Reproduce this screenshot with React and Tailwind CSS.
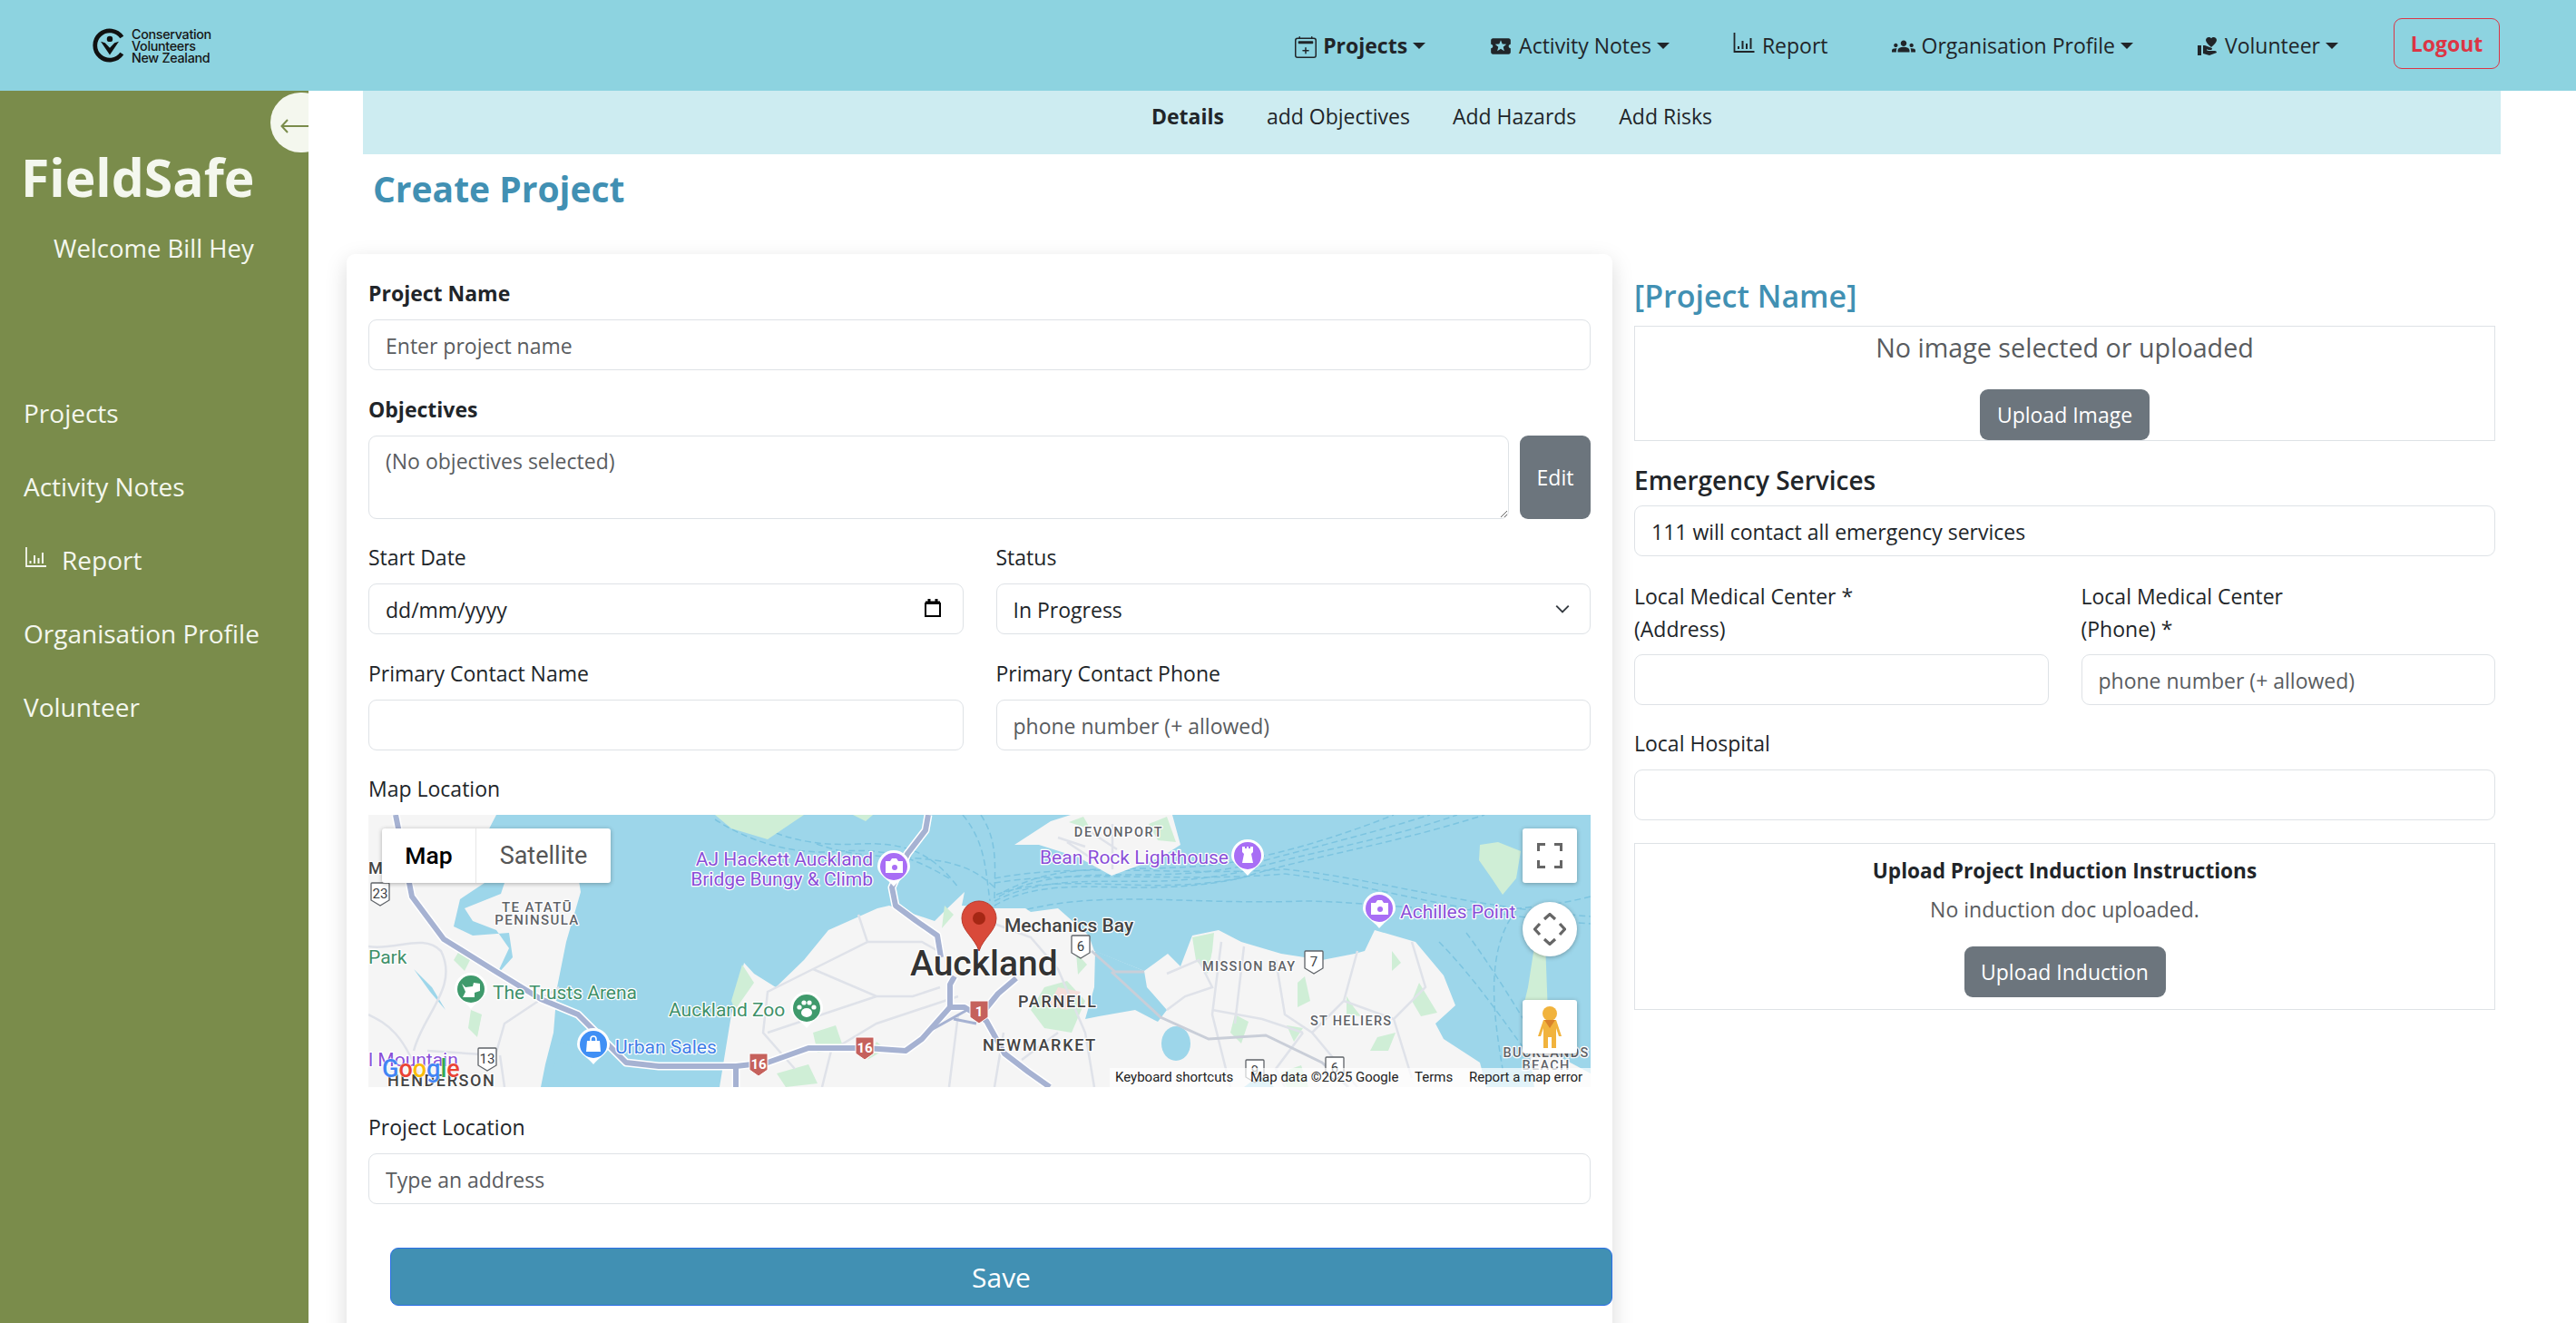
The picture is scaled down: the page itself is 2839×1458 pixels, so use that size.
import { MdLocalActivity, MdGroups, MdVolunteerActivism } from "react-icons/md";
import { BsCalendar2Plus } from "react-icons/bs";

const fontBody = "font-['Open_Sans',sans-serif]";

function Caret() {
  return <span className="ml-[6px] inline-block border-x-[7px] border-t-[7px] border-x-transparent border-t-[#212529]" />;
}

function ChartIcon({ className }) {
  return (
    <svg viewBox="0 0 24 24" fill="none" stroke="currentColor" className={className}>
      <path d="M1 1v21h22" strokeWidth="1.8" />
      <path d="M5.5 16v3M10 10v9M14.5 13v6M19 7v12" strokeWidth="2" />
    </svg>
  );
}

function NavItem({ icon, label, bold, caret }) {
  return (
    <div className={`flex items-center text-[#212529] ${bold ? "font-bold" : ""}`}>
      {icon}
      <span className="ml-[7px]">{label}</span>
      {caret && <Caret />}
    </div>
  );
}

function Logo() {
  return (
    <div className="flex items-center ml-[102px]">
      <svg viewBox="0 0 40 40" className="w-[38px] h-[38px]">
        <path d="M34 10.5A17 17 0 1 0 34 29.5" fill="none" stroke="#111" strokeWidth="5" />
        <circle cx="20" cy="12.5" r="3.4" fill="#111" />
        <path d="M9.5 15.5L20 31L30.5 15.5L25.5 17L20 23L14.5 17Z" fill="#111" />
      </svg>
      <div className="ml-[5px] font-['Inter',sans-serif] font-medium text-[14.3px] leading-[13px] tracking-[-0.3px] text-[#151515]">
        <div>Conservation</div>
        <div>Volunteers</div>
        <div>New Zealand</div>
      </div>
    </div>
  );
}

function Header() {
  return (
    <header className="h-[100px] shrink-0 bg-[#8dd3e0] flex items-center text-[23px]">
      <Logo />
      <nav className="ml-auto pr-[84px] flex items-center gap-[70px]">
        <NavItem bold caret label="Projects" icon={<BsCalendar2Plus className="w-[24px] h-[26px] mt-[4px]" />} />
        <NavItem caret label="Activity Notes" icon={<MdLocalActivity className="w-[26px] h-[26px] mt-[2px]" />} />
        <NavItem label="Report" icon={<ChartIcon className="w-[25px] h-[24px] mb-[6px]" />} />
        <NavItem caret label="Organisation Profile" icon={<MdGroups className="w-[26px] h-[26px] mt-[2px]" />} />
        <NavItem caret label="Volunteer" icon={<MdVolunteerActivism className="w-[24px] h-[24px] mt-[2px]" />} />
        <button className="-ml-[9px] mb-[4px] w-[117px] h-[56px] rounded-[9px] border border-[#dc3545] text-[#dc3545] font-bold text-[23px]">Logout</button>
      </nav>
    </header>
  );
}

function Sidebar() {
  const links = ["Projects", "Activity Notes", "Report", "Organisation Profile", "Volunteer"];
  return (
    <aside className="relative w-[340px] shrink-0 bg-[#7a8c4b] text-[#f4f7ee] overflow-hidden">
      <div className="absolute left-[298px] top-[2px] w-[68px] h-[66px] rounded-full bg-[#f4f7ee]">
        <svg viewBox="0 0 32 16" className="absolute left-[11px] top-[29px] w-[32px] h-[16px]" fill="none" stroke="#7a8c4b" strokeWidth="2">
          <path d="M32 8H2M8 1L1.5 8L8 15" />
        </svg>
      </div>
      <div className="pl-[23px] pt-[55px] text-[57px] font-bold leading-[80px]">FieldSafe</div>
      <div className="pl-[59px] pt-[19px] text-[27.5px] leading-[40px]">Welcome Bill Hey</div>
      <div className="pl-[26px] pt-[141px] flex flex-col gap-[41px] text-[28px] leading-[40px]">
        {links.map((l) => (
          <div key={l} className="flex items-center">
            {l === "Report" && <ChartIcon className="w-[30px] h-[24px] -ml-[1px] mr-[13px] mb-[6px]" />}
            {l}
          </div>
        ))}
      </div>
    </aside>
  );
}

function Label({ children, bold }) {
  return <div className={`h-[36px] leading-[34px] mb-[10px] text-[23px] text-[#212529] ${bold ? "font-bold" : ""}`}>{children}</div>;
}

function Input({ placeholder, value, className = "" }) {
  return (
    <input
      readOnly
      placeholder={placeholder}
      defaultValue={value}
      className={`block w-full h-[56px] px-[18px] pt-[2px] rounded-[9px] border border-[#dee2e6] bg-white text-[23px] text-[#212529] placeholder:text-[#595c5f] ${className}`}
    />
  );
}

function Shield({ x, y, n }) {
  return (
    <g transform={`translate(${x - 11} ${y - 13})`}>
      <path d="M2 1H20Q21 1 21 2V20L11 26L1 20V2Q1 1 2 1Z" fill="#fff" stroke="#5f6368" strokeWidth="1.3" />
      <text x="11" y="18" textAnchor="middle" fontSize="15" fill="#3c4043">{n}</text>
    </g>
  );
}

function RedShield({ x, y, n }) {
  return (
    <g transform={`translate(${x - 11} ${y - 13})`}>
      <path d="M1 1H21V19L11 26L1 19Z" fill="#c5615c" stroke="#fff" strokeWidth="1" />
      <text x="11" y="18" textAnchor="middle" fontSize="15" fontWeight="700" fill="#fff">{n}</text>
    </g>
  );
}

function Poi({ x, y, color, children }) {
  return (
    <g transform={`translate(${x} ${y})`}>
      <path d="M-18 0A18 18 0 1 1 18 0C18 9 6 14 0 22C-6 14 -18 9 -18 0Z" fill="#fff" />
      <circle r="15" fill={color} />
      {children}
    </g>
  );
}

function MapText({ x, y, size = 20, fill, anchor = "start", weight = 400, spacing = 0, children }) {
  return (
    <text
      x={x}
      y={y}
      fontSize={size}
      fill={fill}
      fontWeight={weight}
      textAnchor={anchor}
      letterSpacing={spacing}
      stroke="#fff"
      strokeWidth="2.5"
      strokeLinejoin="round"
      paintOrder="stroke"
    >
      {children}
    </text>
  );
}

function MapPanel() {
  const greens = [
    "M382 0L480 0L440 27L400 15Z", "M534 0L556 0L548 7Z", "M100 150L112 160L106 172L94 160Z",
    "M113 215L125 220L120 245L110 235Z", "M412 165L425 185L404 215L400 205Z", "M490 240L515 232L524 258L495 262Z",
    "M450 285L485 275L495 296L460 300Z", "M560 250L570 258L550 270Z", "M635 100L645 110L632 125Z",
    "M745 190L770 183L790 205L775 240L745 235L730 215Z", "M780 152L792 165L782 176Z", "M908 135L932 130L930 150L925 175L912 160Z",
    "M1024 185L1032 178L1038 205L1024 212Z", "M1078 200L1086 212L1094 222L1078 220Z", "M1128 150L1138 163L1128 172Z",
    "M1158 185L1178 218L1160 222L1150 205Z", "M1012 232L1030 235L1020 250Z", "M955 220L970 228L962 252L950 240Z",
    "M1112 245L1132 240L1124 260L1104 260Z", "M772 8L788 2L796 16Z", "M860 10L880 2L890 30L870 28Z", "M1005 284L1028 276L1036 300L1012 300Z",
  ];
  return (
    <div className="relative h-[300px] overflow-hidden bg-[#9dd6ea]">
      <svg viewBox="0 0 1347 300" className="absolute inset-0 w-full h-full font-['Roboto',sans-serif]">
        {/* ferry lanes */}
        <g fill="none" stroke="#7cc4e0" strokeWidth="1.5" strokeDasharray="7 4">
          <path d="M494 32C570 60 640 30 690 80M690 100C760 60 840 95 960 70C1040 45 1120 35 1230 0" />
          <path d="M690 95C770 55 850 88 965 62C1040 40 1120 28 1200 0" />
          <path d="M695 90C770 48 860 80 970 55C1040 36 1100 22 1170 0" />
          <path d="M700 85C780 42 860 72 975 48C1030 36 1080 20 1130 0" />
          <path d="M692 88C770 60 860 92 968 68" />
          <path d="M690 75C780 60 900 75 1010 65C1100 75 1200 110 1347 120" />
          <path d="M690 70C780 52 900 68 1010 60C1100 68 1200 100 1347 112" />
          <path d="M705 110C800 80 900 100 1030 95C1120 95 1230 120 1347 90" />
          <path d="M382 5C420 30 470 45 520 40C560 38 590 40 640 70" />
          <path d="M420 5C450 25 490 35 540 32C590 30 620 40 650 80" />
          <path d="M675 0C695 30 690 60 690 95M655 0C680 30 680 60 685 95" />
          <path d="M1180 140C1220 180 1260 240 1290 280M1210 130C1240 170 1270 220 1300 270M1265 105C1230 150 1240 220 1250 280" />
        </g>
        {/* land */}
        <g fill="#f5f5f5">
          <path d="M0 0L141 0L128 25L160 40L230 60L234 85L218 140L208 190L204 240L195 275L190 300L0 300Z" />
          <path d="M387 300L400 220L414 163L425 175L449 190L480 160L507 127L561 103L574 100L594 107L624 117L634 107L657 85L654 100L690 103L724 103L730 107L760 103L794 133L800 150L855 172L881 153L895 167L908 133L937 127L962 140L1006 153L1051 160L1087 153L1098 150L1109 127L1154 140L1185 177L1198 210L1176 230L1185 247L1225 273L1232 300Z" />
          <path d="M712 33L752 7L774 0L886 0L895 33L873 47L819 67L783 47L739 33Z" />
          <path d="M1275 230L1300 215L1304 262L1347 285L1347 300L1285 300Z" />
        </g>
        <path d="M1225 33L1245 30L1270 40L1265 70L1250 88L1238 70L1224 50Z" fill="#cfeed6" />
        <path d="M1285 145L1297 140L1300 220L1278 235L1272 215L1278 190Z" fill="#cfeed6" />
        {/* harbour inlets */}
        <g fill="#9dd6ea">
          <path d="M801 150L855 172L858 190L880 215L870 228L845 215L805 222L790 225L800 190Z" />
          <ellipse cx="890" cy="252" rx="16" ry="19" />
          <path d="M128 75L101 93L94 123L115 133L155 130L159 157L141 177L155 147L141 127L115 117L106 103L146 87L150 75Z" />
          <path d="M50 170L70 190L85 215L68 195Z" />
          <path d="M212 250L232 258L214 300L198 300Z" />
          <path d="M965 300L985 285L998 300Z" />
        </g>
        <g fill="#cfeed6">
          {greens.map((d) => <path key={d} d={d} />)}
        </g>
        <path d="M760 190L785 195L770 215L750 210Z" fill="#f4dedb" />
        {/* minor roads */}
        <g fill="none" stroke="#dfe2e9" strokeWidth="2.5">
          <path d="M0 145C30 150 60 130 80 150C100 190 60 220 50 260M0 220C20 230 40 240 60 300M65 260L140 265L150 230L210 190M145 265L150 300" />
          <path d="M540 110L550 140L490 170L440 195L435 240L470 280M490 170L560 200L600 200L630 190M550 140L610 140L628 150M440 240L560 200M500 300L510 260L560 230L650 200" />
          <path d="M690 120L730 135L760 170L790 240L800 300M700 240L690 300M650 220L640 300M720 270L760 240" />
          <path d="M880 175L915 160L930 190L900 200L880 215M940 140L930 220L950 300M965 145L955 230M1000 160L1010 220L1040 240L1090 300M1040 240L1075 205L1090 150M1075 205L1130 225L1150 290M1130 225L1165 190L1150 140" />
          <path d="M1030 240L1000 280L1010 300M930 215L985 225L1030 240" />
          <path d="M770 30L800 50M790 15L825 38M820 10L820 60M760 25L790 35" />
        </g>
        <path d="M819 173L873 223L926 247L989 243L1051 273L1080 300M797 150L823 173L855 173" fill="none" stroke="#c9ced8" strokeWidth="3" />
        {/* motorways */}
        <g fill="none" stroke="#fff" strokeWidth="9" strokeLinejoin="round">
          <path d="M30 0L48 90L83 137L141 173L190 203L231 220L248 237L284 273L320 277L405 277L440 273L485 257L548 257L592 260L610 247L641 212L657 212L681 227L701 263L727 283L751 300" />
          <path d="M617 0L614 17L594 43L577 80L581 100L604 117L627 133L631 157M641 212L641 187L646 178M714 180L694 197L681 213" />
          <path d="M405 277L405 300" />
        </g>
        <g fill="none" stroke="#a6b2d2" strokeWidth="6" strokeLinejoin="round">
          <path d="M30 0L48 90L83 137L141 173L190 203L231 220L248 237L284 273L320 277L405 277L440 273L485 257L548 257L592 260L610 247L641 212L657 212L681 227L701 263L727 283L751 300" />
          <path d="M617 0L614 17L594 43L577 80L581 100L604 117L627 133L631 157M641 212L641 187L646 178M714 180L694 197L681 213" />
          <path d="M405 277L405 300" />
        </g>
        <path d="M615 240L660 215M645 225L670 230" fill="none" stroke="#a6b2d2" strokeWidth="3" />

        <Shield x={13} y={87} n="23" />
        <Shield x={131} y={269} n="13" />
        <Shield x={785} y={145} n="6" />
        <Shield x={1042} y={162} n="7" />
        <Shield x={977} y={282} n="9" />
        <Shield x={1065} y={279} n="6" />
        <RedShield x={430} y={275} n="16" />
        <RedShield x={547} y={257} n="16" />
        <RedShield x={673} y={217} n="1" />

        <MapText x={186} y={107} anchor="middle" size={15} weight={500} fill="#5f6368" spacing={1.4}>TE ATATŪ</MapText>
        <MapText x={186} y={121} anchor="middle" size={15} weight={500} fill="#5f6368" spacing={1.4}>PENINSULA</MapText>
        <MapText x={827} y={24} anchor="middle" size={14.5} weight={500} fill="#5f6368" spacing={1.6}>DEVONPORT</MapText>
        <MapText x={716} y={212} size={18} weight={500} fill="#444" spacing={1.7}>PARNELL</MapText>
        <MapText x={677} y={260} size={18} weight={500} fill="#444" spacing={1.7}>NEWMARKET</MapText>
        <MapText x={919} y={172} size={14.5} weight={500} fill="#5f6368" spacing={1.3}>MISSION BAY</MapText>
        <MapText x={1038} y={232} size={14.5} weight={500} fill="#5f6368" spacing={1.3}>ST HELIERS</MapText>
        <MapText x={1298} y={267} anchor="middle" size={14.5} weight={500} fill="#5f6368" spacing={1.3}>BUCKLANDS</MapText>
        <MapText x={1298} y={281} anchor="middle" size={14.5} weight={500} fill="#5f6368" spacing={1.3}>BEACH</MapText>
        <MapText x={21} y={299} size={18} weight={500} fill="#444" spacing={1.6}>HENDERSON</MapText>
        <MapText x={0} y={65} size={18} weight={500} fill="#444">M</MapText>

        <MapText x={597} y={177} size={39} weight={500} fill="#333">Auckland</MapText>
        <MapText x={701} y={129} size={21} weight={500} fill="#444">Mechanics Bay</MapText>
        <MapText x={556} y={56} anchor="end" size={21} fill="#8a4fd8">AJ Hackett Auckland</MapText>
        <MapText x={556} y={78} anchor="end" size={21} fill="#8a4fd8">Bridge Bungy &amp; Climb</MapText>
        <MapText x={740} y={54} size={21} fill="#8a4fd8">Bean Rock Lighthouse</MapText>
        <MapText x={1137} y={114} size={21} fill="#8a4fd8">Achilles Point</MapText>
        <MapText x={137} y={203} size={21} fill="#3e9069">The Trusts Arena</MapText>
        <MapText x={331} y={222} size={21} fill="#3e9069">Auckland Zoo</MapText>
        <MapText x={272} y={263} size={21} fill="#3f7fe8">Urban Sales</MapText>
        <MapText x={0} y={164} size={21} fill="#3e9069">Park</MapText>
        <MapText x={0} y={277} size={21} fill="#8a4fd8">l Mountain</MapText>

        <Poi x={579} y={57} color="#a86ef5">
          <path d="M-9 -6H-4L-2 -9H3L5 -6H10V7H-9Z" fill="#fff" />
          <circle cx="1" cy="1" r="3" fill="#a86ef5" />
        </Poi>
        <Poi x={969} y={45} color="#a86ef5">
          <path d="M-6 -10H-3V-8H-1V-10H1V-8H3V-10H6V-4L4 -2L6 8H-6L-4 -2L-6 -4Z" fill="#fff" />
        </Poi>
        <Poi x={1114} y={103} color="#a86ef5">
          <path d="M-9 -6H-4L-2 -9H3L5 -6H10V7H-9Z" fill="#fff" />
          <circle cx="1" cy="1" r="3" fill="#a86ef5" />
        </Poi>
        <Poi x={113} y={192} color="#3f9a6c">
          <path d="M-10 -6L-6 -2L2 -3L3 -7L10 -6L10 2L4 4L4 9H-9L-6 3Z" fill="#fff" />
        </Poi>
        <Poi x={483} y={213} color="#3f9a6c">
          <ellipse cx="0" cy="5" rx="6" ry="5" fill="#fff" />
          <circle cx="-8" cy="-1" r="2.6" fill="#fff" />
          <circle cx="-3" cy="-6" r="2.6" fill="#fff" />
          <circle cx="3" cy="-6" r="2.6" fill="#fff" />
          <circle cx="8" cy="-1" r="2.6" fill="#fff" />
        </Poi>
        <Poi x={248} y={253} color="#3f8ff5">
          <path d="M-7 -4H7L8 8H-8Z" fill="#fff" />
          <path d="M-3 -4V-6A3 3 0 0 1 3 -6V-4" fill="none" stroke="#fff" strokeWidth="1.6" />
        </Poi>

        {/* project pin */}
        <path d="M673 150C668 135 654 128 654 114A19 19 0 1 1 692 114C692 128 678 135 673 150Z" fill="#d94a3a" stroke="#b93a2c" strokeWidth="1" />
        <circle cx="673" cy="114" r="7" fill="#a52714" />

        <text x="15" y="289" fontSize="27" fontWeight="500" stroke="#fff" strokeWidth="1" paintOrder="stroke">
          <tspan fill="#4285f4">G</tspan>
          <tspan fill="#ea4335">o</tspan>
          <tspan fill="#fbbc05">o</tspan>
          <tspan fill="#4285f4">g</tspan>
          <tspan fill="#34a853">l</tspan>
          <tspan fill="#ea4335">e</tspan>
        </text>
      </svg>

      {/* map controls */}
      <div className="absolute left-[15px] top-[15px] h-[60px] flex bg-white rounded-[3px] shadow-[0_1px_5px_rgba(0,0,0,0.3)] font-['Roboto',sans-serif] leading-[60px]">
        <div className="w-[103px] text-center font-medium text-[26.5px] text-black">Map</div>
        <div className="w-[149px] text-center text-[27px] text-[#565656] border-l border-[#e6e6e6]">Satellite</div>
      </div>
      <div className="absolute left-[1272px] top-[15px] w-[60px] h-[60px] bg-white rounded-[3px] shadow-[0_1px_5px_rgba(0,0,0,0.3)] flex items-center justify-center">
        <svg viewBox="0 0 28 28" className="w-[28px] h-[28px]" fill="none" stroke="#666" strokeWidth="3">
          <path d="M1.5 9V1.5H9M19 1.5H26.5V9M26.5 19V26.5H19M9 26.5H1.5V19" />
        </svg>
      </div>
      <div className="absolute left-[1272px] top-[96px] w-[60px] h-[60px] bg-white rounded-full shadow-[0_1px_5px_rgba(0,0,0,0.3)] flex items-center justify-center">
        <svg viewBox="0 0 36 36" className="w-[36px] h-[36px]" fill="none" stroke="#666" strokeWidth="3.2">
          <path d="M12 7L18 1.5L24 7M12 29L18 34.5L24 29M7 12L1.5 18L7 24M29 12L34.5 18L29 24" />
        </svg>
      </div>
      <div className="absolute left-[1272px] top-[204px] w-[60px] h-[59px] bg-white rounded-[3px] shadow-[0_1px_5px_rgba(0,0,0,0.3)] flex items-center justify-center">
        <svg viewBox="0 0 26 46" className="w-[26px] h-[46px]">
          <circle cx="13" cy="8" r="8" fill="#f1b33d" />
          <path d="M6 15H20L26 33H23L20 24V46H15V34H11V46H6V24L3 33H0Z" fill="#f1b33d" />
          <path d="M7 15H19L13 24Z" fill="#d9822b" />
        </svg>
      </div>
      <div className="absolute right-0 bottom-0 h-[21px] w-[530px] bg-white/70 flex items-center font-['Roboto',sans-serif] text-[15px] text-[#222]">
        <span className="ml-[6px] w-[149px]">Keyboard shortcuts</span>
        <span className="w-[181px]">Map data ©2025 Google</span>
        <span className="w-[60px]">Terms</span>
        <span>Report a map error</span>
      </div>
    </div>
  );
}

function FormCard() {
  return (
    <section className="w-[1395px] shrink-0 h-[1200px] px-[24px] pt-[26px] bg-white rounded-t-[9px] shadow-[0_8px_24px_rgba(0,0,0,0.15)]">
      <Label bold>Project Name</Label>
      <Input placeholder="Enter project name" />
      <div className="mt-[26px]">
        <Label bold>Objectives</Label>
      </div>
      <div className="flex gap-[12px]">
        <textarea
          readOnly
          placeholder="(No objectives selected)"
          className="flex-1 h-[92px] px-[18px] py-[10px] rounded-[9px] border border-[#dee2e6] text-[23px] placeholder:text-[#595c5f]"
        />
        <button className="w-[78px] h-[92px] rounded-[9px] bg-[#6c757d] text-white text-[23px]">Edit</button>
      </div>
      <div className="mt-[25px] grid grid-cols-2 gap-x-[36px]">
        <div>
          <Label>Start Date</Label>
          <div className="relative">
            <Input value="dd/mm/yyyy" />
            <svg viewBox="0 0 20 20" className="absolute right-[24px] top-[17px] w-[20px] h-[20px]" fill="none" stroke="#000" strokeWidth="2">
              <path d="M2 5H18V19H2Z" />
              <path d="M2 4H18M6 0V3M14 0V3" strokeWidth="3" />
            </svg>
          </div>
        </div>
        <div>
          <Label>Status</Label>
          <div className="relative">
            <Input value="In Progress" />
            <svg viewBox="0 0 16 16" className="absolute right-[22px] top-[19px] w-[18px] h-[18px]" fill="none" stroke="#343a40" strokeWidth="1.7">
              <path d="M2 5L8 11L14 5" />
            </svg>
          </div>
        </div>
      </div>
      <div className="mt-[26px] grid grid-cols-2 gap-x-[36px]">
        <div>
          <Label>Primary Contact Name</Label>
          <Input />
        </div>
        <div>
          <Label>Primary Contact Phone</Label>
          <Input placeholder="phone number (+ allowed)" />
        </div>
      </div>
      <div className="mt-[25px]">
        <Label>Map Location</Label>
      </div>
      <MapPanel />
      <div className="mt-[27px]">
        <Label>Project Location</Label>
      </div>
      <Input placeholder="Type an address" />
      <button className="block mt-[48px] ml-[24px] w-[1347px] h-[64px] rounded-[9px] border border-[#2a6ee8] bg-[#4190b3] text-white text-[30px]">Save</button>
    </section>
  );
}

function SidePanel() {
  return (
    <section className="w-[949px] ml-[24px] text-[#212529]">
      <div className="mt-[22px] mb-[9px] h-[48px] leading-[48px] text-[34px] font-semibold text-[#4190b3]">[Project Name]</div>
      <div className="h-[127px] border border-[#dee2e6] flex flex-col items-center">
        <div className="h-[46px] leading-[46px] text-[28.7px] text-[#595c5f]">No image selected or uploaded</div>
        <button className="mt-[23px] w-[187px] h-[56px] rounded-[9px] bg-[#6c757d] text-white text-[23px]">Upload Image</button>
      </div>
      <div className="mt-[25px] mb-[10px] h-[36px] leading-[36px] text-[28px] font-semibold">Emergency Services</div>
      <Input value="111 will contact all emergency services" />
      <div className="mt-[26px] grid grid-cols-2 gap-x-[36px]">
        <div>
          <div className="text-[23px] leading-[36px] mb-[10px]">Local Medical Center *<br />(Address)</div>
          <Input />
        </div>
        <div>
          <div className="text-[23px] leading-[36px] mb-[10px]">Local Medical Center<br />(Phone) *</div>
          <Input placeholder="phone number (+ allowed)" />
        </div>
      </div>
      <div className="mt-[25px]">
        <Label>Local Hospital</Label>
      </div>
      <Input />
      <div className="mt-[25px] h-[184px] border border-[#dee2e6] flex flex-col items-center pt-[12px]">
        <div className="h-[36px] leading-[36px] text-[22.6px] font-bold">Upload Project Induction Instructions</div>
        <div className="mt-[6px] h-[36px] leading-[36px] text-[23px] text-[#595c5f]">No induction doc uploaded.</div>
        <button className="mt-[23px] w-[222px] h-[56px] rounded-[9px] bg-[#6c757d] text-white text-[23px]">Upload Induction</button>
      </div>
    </section>
  );
}

export default function App() {
  return (
    <div className={`h-screen overflow-hidden flex flex-col bg-white ${fontBody}`}>
      <Header />
      <div className="flex flex-1 min-h-0">
        <Sidebar />
        <main className="flex-1 min-w-0 pl-[42px] pr-[83px]">
          <div className="ml-[18px] h-[70px] bg-[#cdecf1] flex items-center justify-center gap-[47px] text-[23px] text-[#212529] pb-[13px]">
            <span className="font-bold">Details</span>
            <span>add Objectives</span>
            <span>Add Hazards</span>
            <span>Add Risks</span>
          </div>
          <h1 className="ml-[29px] mt-[14px] h-[48px] leading-[48px] text-[39px] font-bold text-[#4190b3]">Create Project</h1>
          <div className="mt-[48px] flex items-start">
            <FormCard />
            <SidePanel />
          </div>
        </main>
      </div>
    </div>
  );
}
